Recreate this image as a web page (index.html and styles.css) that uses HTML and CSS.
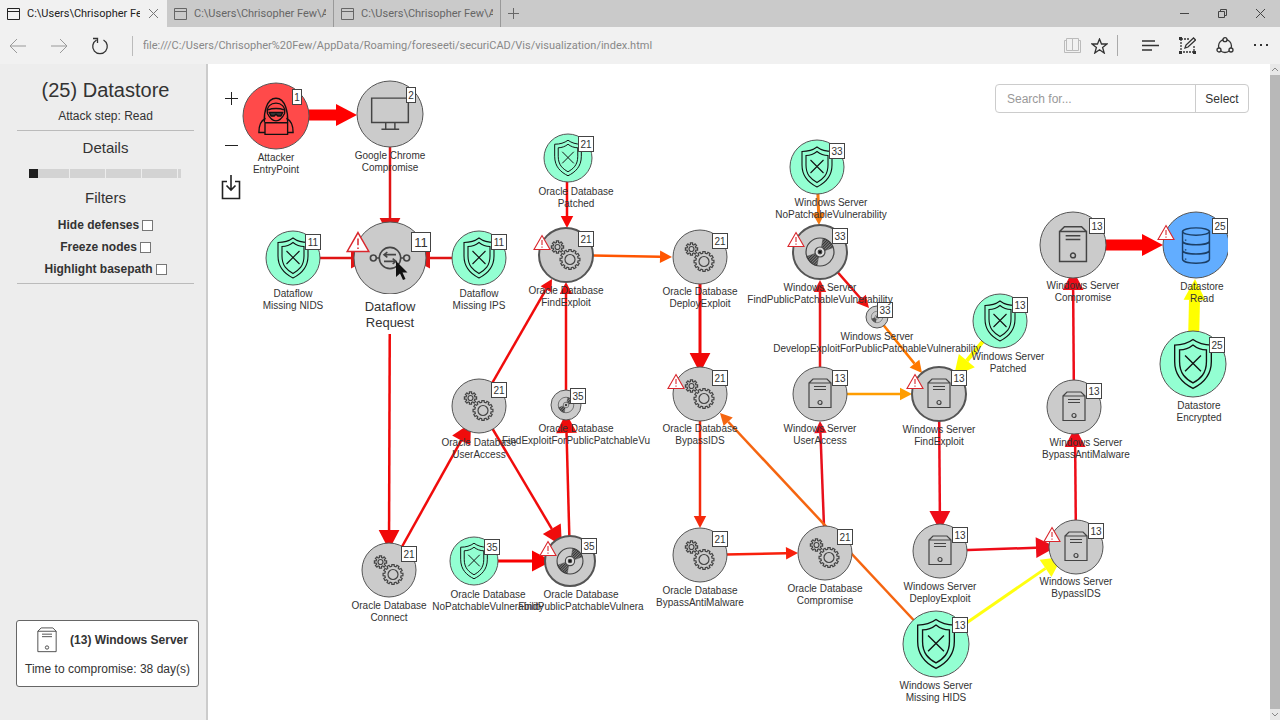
FILE: index.html
```html
<!DOCTYPE html>
<html lang="en">
<head>
    <meta charset="UTF-8">
    <meta name="viewport" content="width=device-width, initial-scale=1.0">
    <title>securiCAD - Visualization</title>
    <link rel="stylesheet" href="styles.css">
</head>
<body>
    <header class="browser">
        <div class="tabs">
            <div class="tab active">
                <svg class="tab-icon" width="13" height="12"><path d="M.5.5h12v11H.5zM.5 3.5h12"/></svg>
                <span class="tab-title">C:\Users\Chrisopher Few\AppData</span>
                <button class="tab-close" aria-label="Close tab"><svg width="9" height="9"><path d="M0 0l9 9M9 0L0 9"/></svg></button>
            </div>
            <div class="tab">
                <svg class="tab-icon" width="13" height="12"><path d="M.5.5h12v11H.5zM.5 3.5h12"/></svg>
                <span class="tab-title">C:\Users\Chrisopher Few\AppData</span>
            </div>
            <div class="tab">
                <svg class="tab-icon" width="13" height="12"><path d="M.5.5h12v11H.5zM.5 3.5h12"/></svg>
                <span class="tab-title">C:\Users\Chrisopher Few\AppData</span>
            </div>
            <button class="new-tab" aria-label="New tab"><svg width="11" height="11"><path d="M5.5 0v11M0 5.5h11"/></svg></button>
            <div class="window-buttons">
                <button aria-label="Minimize"><svg width="9" height="9"><path d="M0 4.5h9"/></svg></button>
                <button aria-label="Restore"><svg width="9" height="9"><path d="M.5 2.5h6v6h-6zM2.5 2.5v-2h6v6h-2"/></svg></button>
                <button aria-label="Close"><svg width="9" height="9"><path d="M0 0l9 9M9 0L0 9"/></svg></button>
            </div>
        </div>
        <div class="toolbar">
            <button class="nav muted" aria-label="Back"><svg width="18" height="16"><path d="M17 8H1M8 1L1 8l7 7"/></svg></button>
            <button class="nav muted" aria-label="Forward"><svg width="18" height="16"><path d="M1 8h16M10 1l7 7-7 7"/></svg></button>
            <button class="nav" aria-label="Refresh"><svg class="bold" width="18" height="18"><path d="M5.500 3A7.300 7.300 0 1 0 12.500 3M2 1.500h4.500V6"/></svg></button>
            <label class="address"><input type="text" aria-label="Address" value="file:///C:/Users/Chrisopher%20Few/AppData/Roaming/foreseeti/securiCAD/Vis/visualization/index.html"></label>
            <button class="tool pale" aria-label="Reading view"><svg width="17" height="15"><path d="M2.500.5h6v12h-6zM8.500.5h6v12h-6zM2.500 2.500h-2v12h16v-12h-2"/></svg></button>
            <button class="tool star" aria-label="Favorites"><svg class="bold" width="17" height="16"><path d="M8.500 1l2 5h5.500l-4.400 3.400L13.200 15 8.500 11.700 3.800 15l1.600-5.600L1 6h5.500z"/></svg></button>
            <button class="tool hub" aria-label="Hub"><svg class="bold" width="17" height="11"><path d="M0 1h13M0 5.500h17M0 10h10"/></svg></button>
            <button class="tool note" aria-label="Web note">
                <svg class="bold" width="17" height="17"><path stroke-dasharray="2 1" d="M2 2h8M2 2v13h13V8"/><path d="M6 11l1-3 7.500-7 2 2-7.500 7z"/><path class="solid" d="M0 0h3v3H0zM0 14h3v3H0zM14 14h3v3h-3z"/></svg>
            </button>
            <button class="tool share" aria-label="Share">
                <svg class="bold" width="18" height="17"><circle cx="9" cy="9" r="6.500"/><circle class="knot" cx="9" cy="2.700" r="2"/><circle class="knot" cx="3" cy="13" r="2"/><circle class="knot" cx="15" cy="13" r="2"/></svg>
            </button>
            <button class="tool more" aria-label="More"><svg width="15" height="3"><path class="solid" d="M0 0h2v2H0zM6 0h2v2H6zM12 0h2v2h-2z"/></svg></button>
        </div>
    </header>

    <div class="page">
        <aside class="sidebar">
            <div class="panel">
                <h1>(25) Datastore</h1>
                <p>Attack step: Read</p>
            </div>
            <div class="panel">
                <h2><label for="details">Details</label></h2>
                <input type="range" id="details" min="0" max="4" value="0">
                <h2>Filters</h2>
                <div class="filter"><label for="hide">Hide defenses</label><input type="checkbox" id="hide"></div>
                <div class="filter"><label for="freeze">Freeze nodes</label><input type="checkbox" id="freeze"></div>
                <div class="filter"><label for="highlight">Highlight basepath</label><input type="checkbox" id="highlight"></div>
            </div>
            <div class="info">
                <div class="info-title">
                    <svg width="20" height="26" viewBox="-12 -16 24 31"><use href="#server"/></svg>
                    <strong>(13) Windows Server</strong>
                </div>
                <p>Time to compromise: 38 day(s)</p>
            </div>
        </aside>

        <main class="canvas">
            <svg class="graph">
                <defs>
                    <pattern id="hatch" width="2" height="2" patternUnits="userSpaceOnUse" patternTransform="rotate(45)">
                        <rect width="1" height="2" fill="#222"/>
                    </pattern>
                    <g id="shield">
                        <path d="M0-20C-4-17-9-15.500-15-15.500V-2C-15 10-8 16 0 20 8 16 15 10 15-2V-15.500C9-15.500 4-17 0-20z"/>
                        <path d="M0-15.500C-3-13-7-11.500-11-11.500V-2C-11 8-6 12 0 15.500 6 12 11 8 11-2V-11.500C7-11.500 3-13 0-15.500z"/>
                        <path d="M-6.500-7l13 13M6.500-7l-13 13"/>
                    </g>
                    <g id="gears">
                        <path class="gear-small"/><circle cx="-8.500" cy="-8" r="2.500"/>
                        <path class="gear-large"/><circle cx="4" cy="4.500" r="5"/>
                    </g>
                    <g id="disc">
                        <circle r="14"/>
                        <path fill="url(#hatch)" stroke-width=".5" d="M1.500-5L3-13.700A14 14 0 0 1 13.300-4.500L5-1.500A5.500 5.500 0 0 0 1.500-5zM-1.500 5L-3 13.700A14 14 0 0 1-13.300 4.500L-5 1.500A5.500 5.500 0 0 0-1.500 5z"/>
                        <circle r="5" fill="#ddd"/><circle r="1.800" fill="#111"/>
                    </g>
                    <g id="server">
                        <path d="M-11-11h22v24.500h-22zM-11-11l4-4H7l4 4M-6-7.500H6M-6-4.500H6"/>
                        <circle cy="8.500" r="2"/>
                    </g>
                    <g id="database">
                        <ellipse cy="-11" rx="11" ry="3"/>
                        <path d="M-11-11V11.500C-11 16 11 16 11 11.500V-11M-11-3.500C-11 1 11 1 11-3.500M-11 4C-11 8.500 11 8.500 11 4M-8.500-4.500v1M-8.500 3.500v1M-8.500 11v1"/>
                    </g>
                    <g id="monitor">
                        <path d="M-15-13h30V7h-30zM-3.500 7v5M4 7v5M-7 12.500H7.500"/>
                    </g>
                    <g id="hacker">
                        <path d="M-9.500 5C-10-2-8-14.500 0-14.500S10-2 9.500 5M-7-2C-8-8-4-10.500 0-10.500S8-8 7-2C5 2 3 4 0 4S-5 2-7-2z"/>
                        <path d="M-6.500-5C-3-6.500 3-6.500 6.500-5"/>
                        <path fill="#333" d="M-5.500-3H5.500L4 0H1.500L0-1.500-1.500 0H-4z"/>
                        <path d="M-8.500 2C-13 4-14 8-14 13.500H-9.500M8.500 2C13 4 14 8 14 13.500H9.500M-9 5.500h18.500v9.500h-18.500z"/>
                    </g>
                    <g id="connector">
                        <circle r="8"/><circle cx="-12.500" r="2.200"/><circle cx="12.500" r="2.200"/>
                        <path d="M-10.500 0h3M10.500 0h-3M-4.500-2.500h9M-2-4.500l-2.500 2 2.500 2M4.500 2.500h-9M2 .5l2.500 2-2.500 2"/>
                    </g>
                    <g id="warning">
                        <path fill="#fff" d="M0-8.500L8 5.500H-8z"/>
                        <path d="M0-4v5M0 2.500v1.200"/>
                    </g>
                </defs>
                <g transform="translate(-208 -64)">
                    <g id="edges"></g>
                    <g id="nodes"></g>
                    <g id="labels"></g>
                    <path class="cursor" d="M396 261v16l4-3.500 3 6.500 2.500-1-3-6.500h5z"/>
                </g>
            </svg>
            <div class="controls">
                <button aria-label="Zoom in"><svg width="13" height="13"><path d="M6.500 0v13M0 6.500h13"/></svg></button>
                <button aria-label="Zoom out"><svg width="13" height="13"><path d="M0 6.500h13"/></svg></button>
                <button aria-label="Download"><svg class="download" width="20" height="26"><path d="M6 7.500H1.500v17h17v-17H14M10 1v15M5.500 11.500L10 16l4.500-4.500"/></svg></button>
            </div>
            <form class="search">
                <input type="text" aria-label="Search" placeholder="Search for...">
                <button type="button">Select</button>
            </form>
        </main>
        <div class="scrollbar">
            <svg width="8" height="5"><path d="M1 4l3-3 3 3"/></svg>
            <div class="thumb"></div>
            <svg width="8" height="5"><path d="M1 1l3 3 3-3"/></svg>
        </div>
    </div>
    <script src="graph.js"></script>
</body>
</html>
```

FILE: styles.css
```css
* {
    box-sizing: border-box;
}
body {
    margin: 0;
    height: 100vh;
    display: flex;
    flex-direction: column;
    overflow: hidden;
    font-family: "Liberation Sans", Arial, sans-serif;
    font-size: 12px;
    color: #333;
    background: #fff;
}
h1, h2, p {
    margin: 0;
    font-weight: normal;
}
button {
    padding: 0;
    border: none;
    background: none;
    font: inherit;
    color: inherit;
}
svg {
    display: block;
    fill: none;
    stroke: currentColor;
}

/* browser frame */
.browser {
    font-family: Roboto, "Noto Sans", sans-serif;
    font-size: 11px;
    background: #f1f1f1;
}
.tabs {
    display: flex;
    height: 27px;
    background: #cacaca;
    color: #666;
}
.tab {
    display: flex;
    align-items: center;
    gap: 7px;
    width: 167px;
    padding: 0 7px;
    border-right: 1px solid #999;
}
.tab.active {
    background: #f1f1f1;
    border: none;
    color: #222;
}
.tab-icon {
    flex: none;
}
.tab-title {
    flex: 1;
    overflow: hidden;
    white-space: nowrap;
}
.tab-close {
    padding: 0 2px;
    color: #777;
}
.new-tab {
    padding: 0 7px;
}
.window-buttons {
    display: flex;
    margin-left: auto;
    color: #444;
}
.window-buttons button {
    width: 38px;
    padding: 0 14px;
}
.toolbar {
    display: flex;
    align-items: center;
    height: 37px;
    padding: 0 11px 0 9px;
    color: #333;
}
.nav {
    margin-right: 23px;
}
.muted {
    color: #999;
}
.bold {
    stroke-width: 1.3;
}
.solid {
    fill: #333;
    stroke: none;
}
.knot {
    fill: #f1f1f1;
}
.address {
    flex: 1;
    border-left: 1px solid #bbb;
}
.address input {
    width: 100%;
    height: 20px;
    padding: 0 10px;
    border: none;
    background: none;
    font: inherit;
    color: #888;
}
.tool {
    margin-left: 20px;
}
.pale {
    color: #bbb;
}
.star {
    height: 21px;
    margin-left: 10px;
    padding-right: 9px;
    border-right: 1px solid #aaa;
}
.hub {
    margin-left: 24px;
}

.page {
    display: flex;
    flex: 1;
    min-height: 0;
}

/* sidebar */
.sidebar {
    display: flex;
    flex-direction: column;
    width: 208px;
    background: #ededed;
    border-right: 2px solid #ccc;
    text-align: center;
}
.panel {
    margin: 0 12px 0 17px;
    border-bottom: 1px solid #bbb;
}
h1 {
    padding-top: 14px;
    font-size: 20px;
    line-height: 24px;
}
.panel p {
    padding: 6px 0;
    line-height: 16px;
}
h2 {
    padding-top: 8px;
    font-size: 15px;
    line-height: 18px;
}
.panel input[type="range"] {
    display: block;
    appearance: none;
    width: 152px;
    height: 9px;
    margin: 12px auto 3px 12px;
    background: linear-gradient(to right, #d3d3d3 35px, #ededed 35px) 5px 0 / 36px 9px;
}
input[type="range"]::-webkit-slider-thumb {
    appearance: none;
    width: 9px;
    height: 9px;
    background: #1e1e1e;
}
.filter {
    display: flex;
    justify-content: center;
    align-items: center;
    gap: 3px;
    height: 22px;
    font-weight: bold;
}
h2 + .filter {
    margin-top: 7px;
}
.filter:last-child {
    margin-bottom: 3px;
}
.filter input {
    appearance: none;
    width: 11px;
    height: 11px;
    margin: 0;
    border: 1px solid #777;
    background: #fff;
}
.info {
    margin: auto 7px 33px 16px;
    padding: 5px 0 8px;
    border: 1px solid #666;
    border-radius: 3px;
    background: #fff;
}
.info-title {
    display: flex;
    align-items: center;
    justify-content: center;
    gap: 13px;
    height: 28px;
    padding-left: 10px;
}
.info p {
    padding-top: 7px;
    line-height: 17px;
    white-space: nowrap;
}

/* graph */
.canvas {
    position: relative;
    flex: 1;
    padding-right: 42px;
}
.graph {
    width: 100%;
    height: 100%;
}
.node circle {
    stroke: #555;
}
.node .thick {
    stroke-width: 2;
}
.grey { fill: #cbcbcb; }
.red { fill: #ff4a4a; }
.green { fill: #93ffd2; }
.blue { fill: #62adff; }
.icon {
    stroke: #444;
    stroke-width: 1.2;
}
.icon-shield,
.icon-hacker {
    stroke: #111;
    stroke-width: 1.1;
}
.icon-database {
    stroke: #1c3f66;
}
.warning {
    stroke: #d9262c;
    stroke-width: 1.1;
}
.badge {
    fill: #fff;
    stroke: #444;
}
.node text,
#labels text {
    fill: #333;
    stroke: none;
    font-size: 10px;
    text-anchor: middle;
}
.node .large,
#labels .large {
    font-size: 13px;
}
.label-back {
    fill: #fff;
    stroke: none;
}
.cursor {
    fill: #111;
    stroke: none;
}
.controls {
    position: absolute;
    top: 28px;
    left: 13px;
    display: flex;
    flex-direction: column;
    align-items: center;
    color: #222;
}
.controls button {
    margin-bottom: 34px;
}
.controls button:nth-child(2) {
    margin-bottom: 22px;
}
.download {
    stroke-width: 1.6;
}
.search {
    position: absolute;
    top: 20px;
    right: 21px;
    display: flex;
    height: 29px;
    border: 1px solid #ccc;
    border-radius: 4px;
    background: #fff;
}
.search input {
    width: 200px;
    padding: 0 11px;
    border: none;
    border-right: 1px solid #ccc;
    background: none;
    font: inherit;
}
.search input::placeholder {
    color: #999;
}
.search button {
    width: 52px;
}

.scrollbar {
    display: flex;
    flex-direction: column;
    align-items: center;
    gap: 3px;
    width: 10px;
    padding: 3px 0;
    background: #e8e8e8;
    color: #888;
}
.thumb {
    flex: 1;
    width: 10px;
    background: #b8b8b8;
}
```

FILE: graph.js
```js
const SVG = "http://www.w3.org/2000/svg";

// x, y, radius, fill, icon, badge, label x, label y, lines, options
const nodes = [
    [276, 116, 33, "red", "hacker", 1, 276, 161, ["Attacker", "EntryPoint"]],
    [390, 114, 33, "grey", "monitor", 2, 390, 159, ["Google Chrome", "Compromise"]],
    [293, 258, 27, "green", "shield", 11, 293, 297, ["Dataflow", "Missing NIDS"]],
    [390, 258, 36, "grey", "connector", 11, 390, 311, ["Dataflow", "Request"], "warn large"],
    [479, 258, 27, "green", "shield", 11, 479, 297, ["Dataflow", "Missing IPS"]],
    [568, 158, 24, "green", "shield", 21, 576, 195, ["Oracle Database", "Patched"]],
    [566, 255, 27, "grey", "gears", 21, 566, 294, ["Oracle Database", "FindExploit"], "warn thick"],
    [700, 257, 27, "grey", "gears", 21, 700, 295, ["Oracle Database", "DeployExploit"]],
    [817, 167, 27, "green", "shield", 33, 831, 206, ["Windows Server", "NoPatchableVulnerability"]],
    [820, 252, 27, "grey", "disc", 33, 820, 291, ["Windows Server", "FindPublicPatchableVulnerability"], "warn thick"],
    [877, 317, 11, "grey", "disc", 33, 877, 340, ["Windows Server", "DevelopExploitForPublicPatchableVulnerability"]],
    [1000, 321, 27, "green", "shield", 13, 1008, 360, ["Windows Server", "Patched"]],
    [1073, 245, 33, "grey", "server", 13, 1083, 289, ["Windows Server", "Compromise"]],
    [1196, 245, 33, "blue", "database", 25, 1202, 290, ["Datastore", "Read"], "warn"],
    [1193, 364, 33, "green", "shield", 25, 1199, 409, ["Datastore", "Encrypted"]],
    [1074, 407, 27, "grey", "server", 13, 1086, 446, ["Windows Server", "BypassAntiMalware"]],
    [479, 406, 27, "grey", "gears", 21, 479, 446, ["Oracle Database", "UserAccess"]],
    [566, 405, 15, "grey", "disc", 35, 576, 432, ["Oracle Database", "FindExploitForPublicPatchableVu"]],
    [389, 570, 27, "grey", "gears", 21, 389, 609, ["Oracle Database", "Connect"]],
    [474, 561, 24, "green", "shield", 35, 488, 598, ["Oracle Database", "NoPatchableVulnerability"]],
    [570, 561, 25, "grey", "disc", 35, 581, 598, ["Oracle Database", "FindPublicPatchableVulnera"], "warn thick"],
    [700, 394, 27, "grey", "gears", 21, 700, 432, ["Oracle Database", "BypassIDS"], "warn"],
    [700, 555, 27, "grey", "gears", 21, 700, 594, ["Oracle Database", "BypassAntiMalware"]],
    [825, 553, 27, "grey", "gears", 21, 825, 592, ["Oracle Database", "Compromise"]],
    [820, 394, 27, "grey", "server", 13, 820, 432, ["Windows Server", "UserAccess"]],
    [939, 394, 27, "grey", "server", 13, 939, 433, ["Windows Server", "FindExploit"], "warn thick"],
    [940, 551, 27, "grey", "server", 13, 940, 590, ["Windows Server", "DeployExploit"]],
    [936, 644, 33, "green", "shield", 13, 936, 689, ["Windows Server", "Missing HIDS"]],
    [1076, 547, 27, "grey", "server", 13, 1076, 585, ["Windows Server", "BypassIDS"], "warn"]
];

// from x, y, tip x, y, width, arrow length, color
const edges = [
    [276, 115, 357, 115, 11, 21, "#ff0000"],
    [390, 114, 390, 238, 2.5, 20, "#e01414"],
    [293, 258, 371, 258, 2.5, 20, "#e01414"],
    [479, 258, 410, 258, 2.5, 20, "#e01414"],
    [390, 258, 389, 550, 2.5, 20, "#f00808"],
    [567, 158, 567, 228, 2.5, 12, "#f80808"],
    [566, 255, 672, 257, 2.5, 12, "#ff5500"],
    [479, 406, 552, 279, 2.5, 12, "#f00c0c"],
    [566, 405, 566, 282, 2.5, 12, "#f00c0c"],
    [389, 570, 471, 423, 2.5, 20, "#f00c0c"],
    [479, 406, 562, 546, 2.5, 20, "#f00c0c"],
    [474, 561, 552, 561, 3, 20, "#f80000"],
    [570, 561, 566, 413, 2.5, 20, "#f00c0c"],
    [700, 257, 700, 373, 3, 20, "#f00808"],
    [700, 394, 700, 528, 2.5, 12, "#f52a0c"],
    [700, 555, 798, 553, 2.5, 12, "#f8200c"],
    [825, 553, 820, 421, 2.5, 12, "#e8101c"],
    [936, 644, 720, 413, 2.5, 12, "#f56510"],
    [820, 394, 820, 280, 2.5, 12, "#e81818"],
    [817, 167, 819, 225, 3, 12, "#f57a10"],
    [820, 252, 869, 308, 2.5, 12, "#ee1111"],
    [877, 317, 922, 373, 2.5, 12, "#ff7800"],
    [1000, 321, 954, 376, 4, 20, "#ffff00"],
    [820, 394, 912, 394, 2.5, 12, "#ff9d00"],
    [939, 394, 940, 531, 2.5, 20, "#ee0c18"],
    [940, 551, 1056, 547, 2.5, 20, "#ee0c18"],
    [936, 644, 1062, 557, 3, 20, "#ffff10"],
    [1076, 547, 1075, 427, 2.5, 20, "#ee0c18"],
    [1074, 407, 1073, 270, 2.5, 20, "#ee0c18"],
    [1073, 245, 1163, 245, 11, 21, "#ff0000"],
    [1193, 364, 1195, 279, 11, 21, "#ffff00"]
];

function add(parent, name, attrs, text) {
    const el = document.createElementNS(SVG, name);
    for (const key in attrs) {
        el.setAttribute(key, attrs[key]);
    }
    if (text !== undefined) {
        el.textContent = text;
    }
    parent.appendChild(el);
    return el;
}

function gear(cx, cy, inner, outer, teeth) {
    const step = Math.PI * 2 / teeth;
    const points = [];
    for (let i = 0; i < teeth; i++) {
        [[-0.3, inner], [-0.22, outer], [0.22, outer], [0.3, inner]].forEach(([t, r]) => {
            const a = (i + t) * step;
            points.push((cx + Math.cos(a) * r).toFixed(2) + " " + (cy + Math.sin(a) * r).toFixed(2));
        });
    }
    return "M" + points.join("L") + "z";
}

function drawEdge([x1, y1, x2, y2, width, length, color]) {
    const group = document.getElementById("edges");
    const dist = Math.hypot(x2 - x1, y2 - y1);
    const dx = (x2 - x1) / dist;
    const dy = (y2 - y1) / dist;
    const bx = x2 - dx * length;
    const by = y2 - dy * length;
    const half = length * 0.52;
    add(group, "line", { x1, y1, x2: bx, y2: by, stroke: color, "stroke-width": width });
    add(group, "polygon", {
        points: `${x2},${y2} ${bx - dy * half},${by + dx * half} ${bx + dy * half},${by - dx * half}`,
        fill: color,
        stroke: "none"
    });
}

function drawNode([x, y, r, fill, icon, badge, lx, ly, lines, options = ""]) {
    const large = options.includes("large");
    const scale = r / 27;
    const g = add(document.getElementById("nodes"), "g", { class: "node", transform: `translate(${x} ${y})` });
    add(g, "circle", { r, class: fill + (options.includes("thick") ? " thick" : "") });
    add(g, "use", { href: "#" + icon, class: "icon icon-" + icon, transform: `scale(${scale})` });

    // badge sits on the top right of the circle
    const size = large ? 19 : 15;
    const width = badge < 10 ? 9 : size;
    const bx = large ? 21.5 : Math.round(r * 0.7 - 6) - 0.5 - (r === 11 ? 1 : 0);
    const by = large ? -25.5 : -Math.round(r * 0.55 + 8) - 0.5;
    add(g, "rect", { class: "badge", x: bx, y: by, width, height: size });
    add(g, "text", { x: bx + width / 2, y: by + size / 2 + (large ? 5 : 3.5), class: large ? "large" : "" }, badge);
    if (options.includes("warn")) {
        const s = large ? 1.35 : 1;
        add(g, "use", { href: "#warning", class: "warning", transform: `translate(${(large ? 4 : 3) - r} ${large ? -14 : -11}) scale(${s})` });
    }

    const labels = document.getElementById("labels");
    if (large) {
        add(labels, "rect", { class: "label-back", x: lx - 28, y: ly - 17, width: 56, height: 40 });
    }
    lines.forEach((line, i) => {
        add(labels, "text", { x: lx, y: ly + i * (large ? 16 : 12), class: large ? "large" : "" }, line);
    });
}

document.querySelector(".gear-small").setAttribute("d", gear(-8.5, -8, 4.5, 6.2, 8));
document.querySelector(".gear-large").setAttribute("d", gear(4, 4.5, 8.2, 10, 12));
edges.forEach(drawEdge);
nodes.forEach(drawNode);
```
